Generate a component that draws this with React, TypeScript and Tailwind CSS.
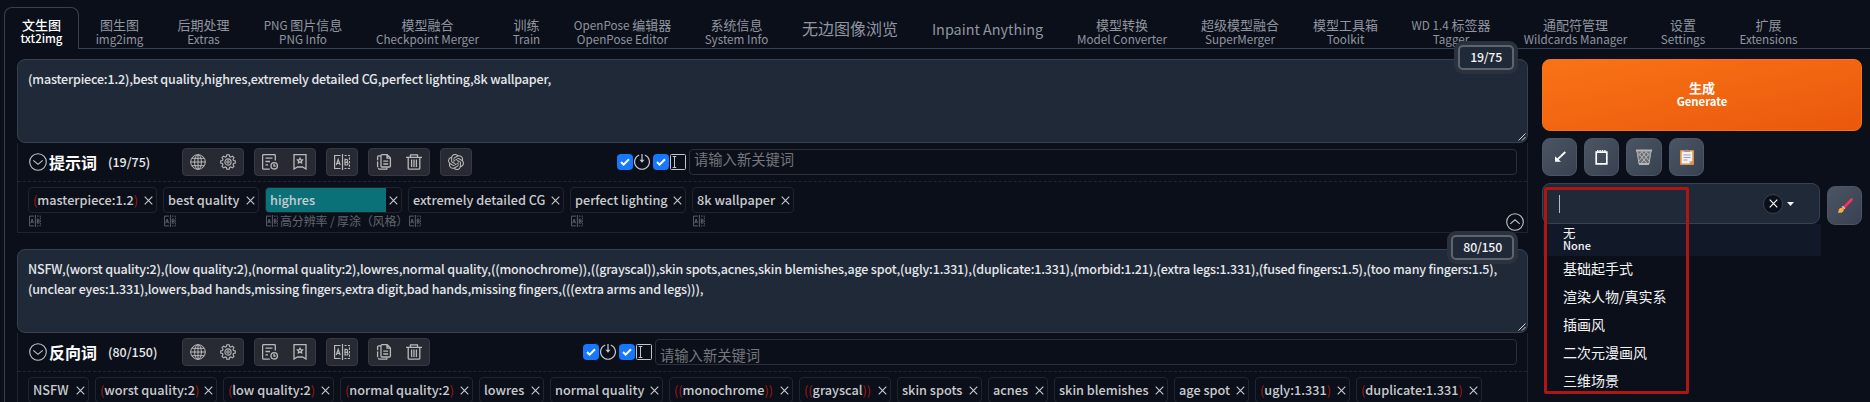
import React from "react";
import { SiOpenai } from "react-icons/si";

type Tab = { w: string; zh: string; en?: string };

const tabs: Tab[] = [
  { w: "w-[81px]", zh: "图生图", en: "img2img" },
  { w: "w-[87px]", zh: "后期处理", en: "Extras" },
  { w: "w-[112px]", zh: "PNG 图片信息", en: "PNG Info" },
  { w: "w-[137px]", zh: "模型融合", en: "Checkpoint Merger" },
  { w: "w-[61px]", zh: "训练", en: "Train" },
  { w: "w-[131px]", zh: "OpenPose 编辑器", en: "OpenPose Editor" },
  { w: "w-[97px]", zh: "系统信息", en: "System Info" },
  { w: "w-[130px]", zh: "无边图像浏览" },
  { w: "w-[145px]", zh: "Inpaint Anything" },
  { w: "w-[124px]", zh: "模型转换", en: "Model Converter" },
  { w: "w-[112px]", zh: "超级模型融合", en: "SuperMerger" },
  { w: "w-[99px]", zh: "模型工具箱", en: "Toolkit" },
  { w: "w-[112px]", zh: "WD 1.4 标签器", en: "Tagger" },
  { w: "w-[137px]", zh: "通配符管理", en: "Wildcards Manager" },
  { w: "w-[78px]", zh: "设置", en: "Settings" },
  { w: "w-[93px]", zh: "扩展", en: "Extensions" },
];

type ChipData = { w: string; text: string; depth?: number; note?: string; active?: boolean };

const positiveChips: ChipData[] = [
  { w: "w-[129px]", text: "masterpiece:1.2", depth: 1 },
  { w: "w-[96px]", text: "best quality" },
  { w: "w-[137px]", text: "highres", active: true, note: "高分辨率 / 厚涂（风格）" },
  { w: "w-[156px]", text: "extremely detailed CG" },
  { w: "w-[116px]", text: "perfect lighting" },
  { w: "w-[102px]", text: "8k wallpaper" },
];

const negativeChips: ChipData[] = [
  { w: "w-[61px]", text: "NSFW" },
  { w: "w-[122px]", text: "worst quality:2", depth: 1 },
  { w: "w-[111px]", text: "low quality:2", depth: 1 },
  { w: "w-[133px]", text: "normal quality:2", depth: 1 },
  { w: "w-[65px]", text: "lowres" },
  { w: "w-[113px]", text: "normal quality" },
  { w: "w-[124px]", text: "monochrome", depth: 2 },
  { w: "w-[92px]", text: "grayscal", depth: 2 },
  { w: "w-[85px]", text: "skin spots" },
  { w: "w-[60px]", text: "acnes" },
  { w: "w-[114px]", text: "skin blemishes" },
  { w: "w-[75px]", text: "age spot" },
  { w: "w-[95px]", text: "ugly:1.331", depth: 1 },
  { w: "w-[126px]", text: "duplicate:1.331", depth: 1 },
];

const styles = ["基础起手式", "渲染人物/真实系", "插画风", "二次元漫画风", "三维场景"];

function Icon({ children, size = 16, sw = 1, className = "" }: { children: React.ReactNode; size?: number; sw?: number; className?: string }) {
  return (
    <svg width={size} height={size} viewBox="0 0 16 16" fill="none" stroke="currentColor" strokeWidth={sw} className={`shrink-0 ${className}`}>
      {children}
    </svg>
  );
}

const Globe = () => (
  <Icon>
    <circle cx="8" cy="8" r="7.3" />
    <ellipse cx="8" cy="8" rx="3.4" ry="7.3" />
    <path d="M8 .7v14.6M.7 8h14.6M1.8 4.3h12.4M1.8 11.7h12.4" />
  </Icon>
);
const Gear = () => (
  <Icon sw={1.1}>
    <path d="M6.800.8h2.400l.4 1.800 1.200.5 1.600-1 1.600 1.600-1 1.600.5 1.200 1.800.4v2.200l-1.800.4-.5 1.200 1 1.600-1.600 1.600-1.600-1-1.200.5-.4 1.800H6.800l-.4-1.800-1.200-.5-1.600 1L2 12.300l1-1.600-.5-1.200-1.800-.4V6.900l1.800-.4.5-1.200-1-1.600L3.600 2.100l1.600 1 1.200-.5z" />
    <circle cx="8" cy="8" r="3.1" />
    <circle cx="8" cy="8" r="1.2" />
  </Icon>
);
const History = () => (
  <Icon sw={1.3}>
    <path d="M13.300 6.500V1.600a1 1 0 0 0-1-1H1.600a1 1 0 0 0-1 1v12.600a1 1 0 0 0 1 1h6.200M3.500 4.200h7M3.500 7.500h4.500M3.500 10.800h2.500" />
    <circle cx="12.200" cy="11.800" r="3.200" />
    <path d="M12 9.800v2.200h1.600" />
  </Icon>
);
const Bookmark = () => (
  <Icon sw={1.3}>
    <path d="M2 .7h12v14.300l-3.500-2h-5l-3.500 2z" />
    <path d="m8 4.200.8 1.500 1.700.3-1.200 1.200.3 1.700L8 8.100l-1.600.8.3-1.700-1.200-1.200 1.700-.3z" />
  </Icon>
);
const AB = ({ size = 16 }: { size?: number }) => (
  <Icon size={size} sw={1.2}>
    <path d="M6.500 1.500H.6v13h5.900M8.500 0v16" />
    <path d="M10.500 1.500h5v13h-5" strokeDasharray="2.200 1.300" />
    <path d="m2.300 11 1.900-5.600L6.100 11M2.900 9.300h2.600M11 5.400V11h1.500c2 0 2-2.700 0-2.700H11h1.200c1.900 0 1.900-2.900 0-2.900z" />
  </Icon>
);
const Copy = () => (
  <Icon sw={1.3}>
    <path d="M6 .7h5.200l3.200 3.200v8.100a1 1 0 0 1-1 1H6a1 1 0 0 1-1-1V1.700a1 1 0 0 1 1-1zM11 .9v3.200h3.300M7.300 7.200h4.800M7.300 10h4.800" />
    <path d="M5 1.800H2.600a1 1 0 0 0-1 1v3.400M1.600 7.500v5.700M2.200 14.200l1 1h7.600v-1.800" />
  </Icon>
);
const Trash = () => (
  <Icon sw={1.3}>
    <path d="M0 3.300h16M4.500 3V.8h7V3M2.200 3.500v10.700a1 1 0 0 0 1 1h9.600a1 1 0 0 0 1-1V3.500M5.600 5.600v7.500M8 5.600v7.500M10.400 5.600v7.500" />
  </Icon>
);
const CircleChevron = ({ up = false }: { up?: boolean }) => (
  <svg width="18" height="18" viewBox="0 0 18 18" fill="none" stroke="#c4c6ca" strokeWidth="1.1" className="shrink-0">
    <circle cx="9" cy="9" r="8.3" />
    <path d={up ? "m4.300 10.800 4.700-4 4.700 4" : "m4.300 7.300 4.700 4 4.700-4"} />
  </svg>
);
const Cross = ({ size = 9 }: { size?: number }) => (
  <svg width={size} height={size} viewBox="0 0 9 9" stroke="currentColor" strokeWidth="1.1" className="shrink-0">
    <path d="m.7.7 7.600 7.600M8.300.7.7 8.300" />
  </svg>
);

function Check() {
  return (
    <span className="flex h-4 w-4 items-center justify-center rounded-[4px] bg-[#1677ff]">
      <svg width="10" height="8" viewBox="0 0 10 8" fill="none" stroke="white" strokeWidth="2">
        <path d="m1 4 2.600 2.600L9 1.200" />
      </svg>
    </span>
  );
}

function ToolGroup({ children }: { children: React.ReactNode }) {
  return (
    <div className="flex h-7 items-center gap-[14px] rounded-[4px] border border-[#373a44] bg-[#282a33] px-[7px] text-[#b8b9bb]">
      {children}
    </div>
  );
}

function PanelHeader({ title, count, ai, low }: { title: string; count: string; ai?: boolean; low?: boolean }) {
  return (
    <div className="flex h-[39px] items-center border-b border-dashed border-[#23262f] pr-[10px] pl-[11px]">
      <div className="flex w-[153px] items-center">
        <CircleChevron />
        <span className="ml-[2px] w-[49px] pb-px text-[16px] leading-5 font-bold text-white">{title}</span>
        <span className="ml-[10px] pb-px text-[12.5px] leading-5 font-medium text-[#e8e9eb]">{count}</span>
      </div>
      <div className="flex gap-[10px]">
        <ToolGroup><Globe /><Gear /></ToolGroup>
        <ToolGroup><History /><Bookmark /></ToolGroup>
        <ToolGroup><AB /></ToolGroup>
        <ToolGroup><Copy /><Trash /></ToolGroup>
        {ai && <ToolGroup><SiOpenai size={16} /></ToolGroup>}
      </div>
      <div className="ml-auto flex items-center text-[#c4c5c8]">
        <Check />
        <Icon className="ml-px" sw={1.2}>
          <path d="M5.200 1A7.400 7.400 0 1 0 10.800 1M8 0v8" />
          <path d="M5.500 5.800 8 8.800l2.500-3z" fill="currentColor" stroke="none" />
        </Icon>
        <span className="ml-[3px]"><Check /></span>
        <Icon className="ml-px">
          <rect x=".5" y=".5" width="15" height="15" rx="1" />
          <path d="M4.500 3v10M2.700 2.500h3.600M2.700 13.500h3.600" />
        </Icon>
        <div className={`ml-[3px] h-[26px] rounded-[4px] border border-[#2c2f38] pl-1 text-[14.3px] text-[#74767c] ${low ? "w-[862px] leading-[29px]" : "w-[828px] leading-[17px]"}`}>
          请输入新关键词
        </div>
      </div>
    </div>
  );
}

function Chip({ chip }: { chip: ChipData }) {
  const depth = chip.depth ?? 0;
  return (
    <div className={`shrink-0 ${chip.w}`}>
      <div className="flex h-[26px] items-center justify-between overflow-hidden rounded-[4px] border border-[#21242d] pr-[3px] text-[12.7px] font-medium text-[#c9cbcf]">
        <span className={`flex h-[26px] items-center whitespace-nowrap ${chip.active ? "-ml-px w-[121px] bg-[#0b7178] pl-[5px]" : "pl-1"}`}>
          <span className="font-normal text-[#a3170f]">{"(".repeat(depth)}</span>
          {chip.text}
          <span className="font-normal text-[#a3170f]">{")".repeat(depth)}</span>
        </span>
        <Cross />
      </div>
      <div className="flex h-4 items-center gap-[2px] pl-px text-[12px] leading-4 whitespace-nowrap text-[#62656c]">
        <AB size={12} />
        <span className="tracking-[-0.15px]">{chip.note}</span>
      </div>
    </div>
  );
}

function PromptBox({ text, count }: { text: string[]; count: string }) {
  return (
    <div className="relative h-[84px] rounded-lg border border-[#374151] bg-[#1f2937] px-[10px] pt-[9px] text-[12.5px] leading-5 font-medium text-[#e5e7eb]">
      {text.map((line) => (
        <div key={line} className="tracking-[-0.165px] whitespace-nowrap">{line}</div>
      ))}
      <div className="absolute -top-[15px] right-[13px] flex h-[25px] items-center justify-center rounded-[5px] border-2 border-[#5d656e] bg-[#1f2937] px-[10px] pb-px text-[12.3px] leading-5 tracking-[-0.2px] text-[#f3f4f6] ring-4 ring-[#2c323d]">
        {count}
      </div>
      <svg width="8" height="8" viewBox="0 0 8 8" stroke="#d4d6d9" className="absolute right-px bottom-px">
        <path d="M.5 7.500l7-7M4 7.500l3.500-3.500" />
      </svg>
    </div>
  );
}

function ToolButton({ children, w, h = "h-[38px]" }: { children: React.ReactNode; w: string; h?: string }) {
  return (
    <button className={`flex items-center justify-center rounded-lg border border-[#4b5563] bg-linear-to-br from-[#4b5563] to-[#374151] ${w} ${h}`}>
      {children}
    </button>
  );
}

/** Chinese glyphs run at the full size of the label, Latin ones slightly smaller. */
function Mixed({ text }: { text: string }) {
  const parts = text.split(/([\x20-\x7e]+)/).filter(Boolean);
  return (
    <span className="whitespace-pre">
      {parts.map((p, i) => (/^[\x20-\x7e]/.test(p) ? <span key={i} className="text-[0.9em]">{p}</span> : p))}
    </span>
  );
}

export default function App() {
  return (
    <div className="h-[402px] w-[1870px] overflow-hidden bg-[#0b0f19] pt-[7px] pl-1 font-['Noto_Sans_CJK_SC',sans-serif]">
      <nav className="flex h-[42px] text-center text-[13px] leading-[14px] text-[#9095a0]">
        <div className="flex w-[75px] flex-col items-center rounded-t-lg border border-b-0 border-[#374151] pt-[10px] font-medium whitespace-nowrap text-white">
          <span>文生图</span>
          <span className="text-[11.5px] leading-[13px]">txt2img</span>
        </div>
        {tabs.map((t) => (
          <div key={t.zh} className={`flex flex-col items-center border-b border-[#374151] whitespace-nowrap ${t.w} ${t.en ? "pt-[11px]" : "pt-[14px] text-[16px]"}`}>
            <Mixed text={t.zh} />
            {t.en && <span className="text-[11.7px] leading-[13px]">{t.en}</span>}
          </div>
        ))}
        <div className="flex-1 border-b border-[#374151]" />
      </nav>
      <main className="flex h-[400px] border-l border-[#374151] pt-[10px] pl-3">
        <section className="w-[1511px] shrink-0">
          <PromptBox count="19/75" text={["(masterpiece:1.2),best quality,highres,extremely detailed CG,perfect lighting,8k wallpaper,"]} />
          <div className="relative h-[90px] border-x border-b border-[#21242d]">
            <PanelHeader title="提示词" count="(19/75)" ai />
            <div className="flex gap-[6px] pt-[5px] pl-[10px]">
              {positiveChips.map((c) => <Chip key={c.text} chip={c} />)}
            </div>
            <div className="absolute right-[3px] bottom-px"><CircleChevron up /></div>
          </div>
          <div className="mt-4">
            <PromptBox
              count="80/150"
              text={[
                "NSFW,(worst quality:2),(low quality:2),(normal quality:2),lowres,normal quality,((monochrome)),((grayscal)),skin spots,acnes,skin blemishes,age spot,(ugly:1.331),(duplicate:1.331),(morbid:1.21),(extra legs:1.331),(fused fingers:1.5),(too many fingers:1.5),",
                "(unclear eyes:1.331),lowers,bad hands,missing fingers,extra digit,bad hands,missing fingers,(((extra arms and legs))),",
              ]}
            />
          </div>
          <div className="h-[90px] border-x border-b border-[#21242d]">
            <PanelHeader title="反向词" count="(80/150)" low />
            <div className="flex gap-[6px] pt-[5px] pl-[10px]">
              {negativeChips.map((c) => <Chip key={c.text} chip={c} />)}
            </div>
          </div>
        </section>

        <aside className="ml-[14px] w-[320px] shrink-0">
          <button className="flex h-[72px] w-full flex-col items-center justify-center rounded-lg border border-[#f97316] bg-linear-to-br from-[#f97316] to-[#ea580c] pb-px text-[13px] leading-[14px] font-bold text-white">
            <span>生成</span>
            <span className="text-[11.3px] leading-[13px]">Generate</span>
          </button>
          <div className="mt-[7px] flex gap-[7px]">
            <ToolButton w="w-[35px]">
              <svg width="12" height="12" viewBox="0 0 12 12" fill="none" stroke="white" strokeWidth="1.8">
                <path d="M11.300 1 2.500 9.300" /><path d="M1 5.200v5.600h6z" fill="white" stroke="none" />
              </svg>
            </ToolButton>
            <ToolButton w="w-[35px]">
              <svg width="13" height="15" viewBox="0 0 13 15" fill="none" stroke="white" strokeWidth="1.7">
                <path d="M1.200 2.200h10.600v11.600H1.200z" /><path d="M2 .8h9" strokeDasharray="1.400 1" />
              </svg>
            </ToolButton>
            <ToolButton w="w-[36px]">
              <svg width="16" height="16" viewBox="0 0 16 16" fill="none" stroke="#b5b5b5">
                <path d="m1 2 2 13h10l2-13" fill="#6b6f75" />
                <path d="m2 3.500 9 11M5.500 2.500 13 12M10 2.500l4 5M14 3.500l-9 11M10.500 2.500 3 12M6 2.500l-4 5" />
                <path d="M0 1.500h16M3 15h10" strokeWidth="2" />
              </svg>
            </ToolButton>
            <ToolButton w="w-[35px]">
              <svg width="14" height="16" viewBox="0 0 14 16">
                <rect y="1" width="14" height="15" rx="1" fill="#e0913f" />
                <path d="M1.700 2.500h10.600v9.500l-2.800 2.500H1.700z" fill="#f2f1f5" />
                <path d="M9.500 14.500V12h2.800z" fill="#b9b8c4" />
                <path d="M4 2.800V1.300h2L7 0l1 1.300h2v1.500z" fill="#8b8d95" />
                <path d="M3.500 6h7M3.500 8.500h7M3.500 11h4" stroke="#a09fae" />
              </svg>
            </ToolButton>
          </div>
          <div className="relative mt-[7px] flex items-start gap-[7px]">
            <div className="flex h-[41px] w-[278px] shrink-0 items-center rounded-lg border border-[#374151] bg-[#1f2937] pl-4">
              <span className="h-[18px] w-px bg-[#b6bac1]" />
              <span className="ml-[203px] flex h-5 w-5 items-center justify-center rounded-full border border-[#374151] bg-[#0b0f19] text-white"><Cross size={9} /></span>
              <svg width="7" height="4" viewBox="0 0 7 4" className="ml-[4px]"><path d="M0 0h7L3.500 4z" fill="#f3f4f6" /></svg>
            </div>
            <div className="pt-[3px]">
              <ToolButton w="w-[35px]" h="h-[39px]">
                <svg width="16" height="16" viewBox="0 0 16 16" fill="none">
                  <path d="M14.500 1.500 6.500 10" stroke="#f8315f" strokeWidth="2.700" strokeLinecap="round" />
                  <path d="m5.300 8.300 2.500 2.500" stroke="#c9ced6" strokeWidth="1.5" />
                  <path d="M1 15c.5-1.200.4-3.200 1.600-4.500 1-1 2.600-.9 3.500 0 .9 1 .8 2.500-.2 3.300C4.600 15 2.500 14.700 1 15z" fill="#ffb02e" />
                </svg>
              </ToolButton>
            </div>
            <div className="absolute top-1 left-[2px] z-10 h-[207px] w-[145px] rounded-[2px] border-[3px] border-[#ae1515]" />
          </div>
          <ul className="-mt-px ml-px w-[278px] text-[14px] leading-6 text-[#f3f4f6]">
            <li className="flex h-8 flex-col bg-[#111827] pt-[3px] pl-5 text-[12.5px] leading-[12px]">
              <span>无</span>
              <span className="text-[11px] leading-[13px] font-medium">None</span>
            </li>
            {styles.map((s) => <li key={s} className="h-7 pl-5">{s}</li>)}
          </ul>
        </aside>
      </main>
    </div>
  );
}
